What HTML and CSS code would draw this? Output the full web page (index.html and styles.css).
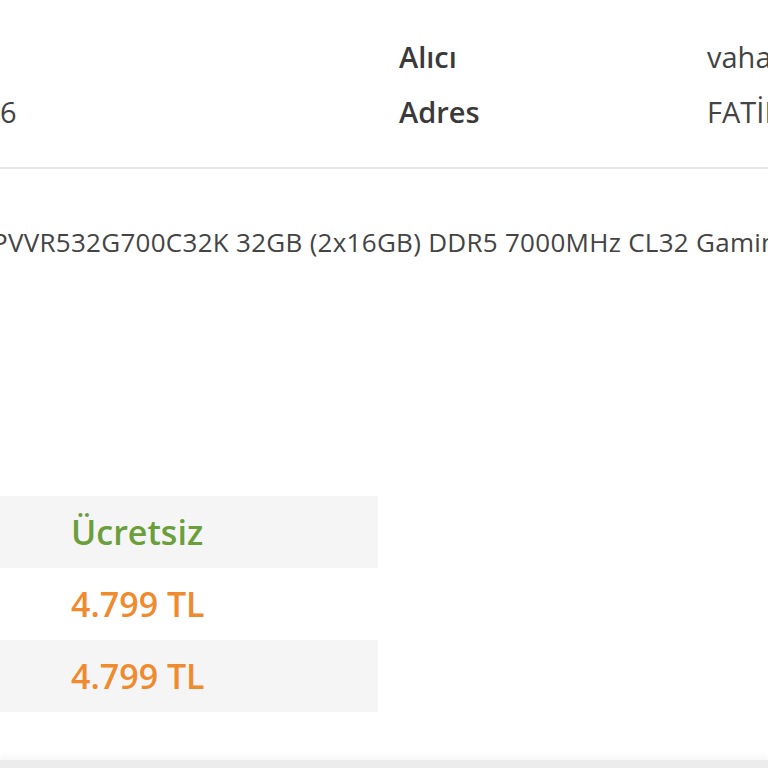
FILE: index.html
```html
<!DOCTYPE html>
<html lang="tr">
<head>
<meta charset="utf-8">
<link rel="stylesheet" href="styles.css">
</head>
<body>
<div class="page">
  <section class="info">
    <div class="info-row">
      <div class="info-left"></div>
      <div class="info-label">Alıcı</div>
      <div class="info-value">vahap</div>
    </div>
    <div class="info-row">
      <div class="info-left">6</div>
      <div class="info-label">Adres</div>
      <div class="info-value">FATİH</div>
    </div>
  </section>
  <section class="product">
    <p class="product-name">PVVR532G700C32K 32GB (2x16GB) DDR5 7000MHz CL32 Gaming</p>
  </section>
  <section class="totals">
    <div class="total-row alt"><span class="total-value free">Ücretsiz</span></div>
    <div class="total-row"><span class="total-value price">4.799 TL</span></div>
    <div class="total-row alt"><span class="total-value price">4.799 TL</span></div>
  </section>
  <footer class="bottom-bar"></footer>
</div>
</body>
</html>
```
FILE: styles.css
```css
html, body {
  margin: 0;
  padding: 0;
  background: #fff;
}
body {
  font-family: "Open Sans", "Noto Sans", sans-serif;
  color: #333;
  overflow: hidden;
}
.page {
  width: 768px;
  height: 768px;
  overflow: hidden;
  display: flex;
  flex-direction: column;
}
.info {
  padding-top: 29px;
  padding-bottom: 28px;
  border-bottom: 2px solid #e8e8e8;
}
.info-row {
  display: grid;
  grid-template-columns: 399px 308px 1fr;
  height: 55px;
  align-items: center;
  font-size: 29px;
  white-space: nowrap;
}
.info-left {
  color: #444;
  letter-spacing: -0.3px;
}
.info-label {
  font-weight: 600;
  color: #3a3a3a;
}
.info-value {
  color: #444;
  overflow: hidden;
}
.product {
  padding-top: 57px;
}
.product-name {
  margin: 0;
  font-size: 26px;
  line-height: 32px;
  color: #444;
  white-space: nowrap;
  margin-left: -8px;
  letter-spacing: 0.28px;
}
.totals {
  margin-top: 238px;
  width: 378px;
}
.total-row {
  height: 72px;
  display: flex;
  align-items: center;
  padding-left: 71px;
}
.total-row.alt {
  background: #f5f5f5;
}
.total-value {
  font-size: 34px;
  font-weight: 600;
}
.free {
  color: #6a9f3b;
}
.price {
  color: #ef8a2e;
}
.bottom-bar {
  margin-top: auto;
  height: 8px;
  background: #ececec;
  box-shadow: 0 -4px 6px rgba(0,0,0,0.04);
}
```
